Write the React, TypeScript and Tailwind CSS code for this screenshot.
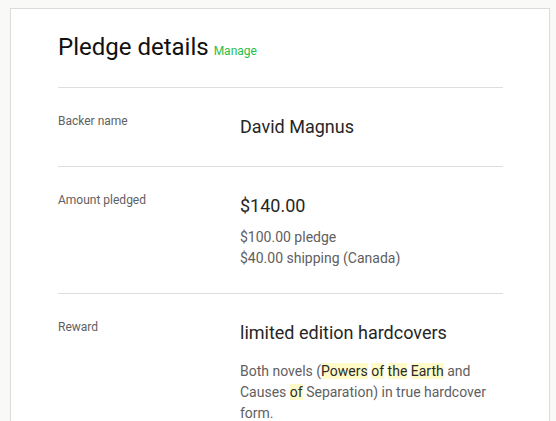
import React from "react";

function Hl({ children }: { children: React.ReactNode }) {
  return <span className="bg-[#fffbc8] text-[#2a2a2a]">{children}</span>;
}

function Row({ label, children }: { label: string; children: React.ReactNode }) {
  return (
    <div className="flex border-t border-[#dedede] pt-6 pb-6">
      <div className="w-[182px] shrink-0 text-[12px] leading-[18px] text-[#5f6061]">{label}</div>
      <div className="flex-1">{children}</div>
    </div>
  );
}

export default function App() {
  return (
    <div className="bg-[#f9f9f8] pl-[10px] pr-[6px] pt-2 [font-family:Roboto,'Liberation_Sans',sans-serif] overflow-hidden h-[421px]">
      <div className="bg-white border border-[#dcdcdc] pl-[47px] pr-[46px] pt-[22px] min-h-[600px]">
        <div className="flex items-baseline mb-6">
          <h1 className="text-[24px] leading-[32px] text-[#111]">Pledge details</h1>
          <span className="ml-[5px] text-[12px] text-[#2bbd4a]">Manage</span>
        </div>
        <Row label="Backer name">
          <div className="text-[18px] leading-[30px] text-[#262626]">David Magnus</div>
        </Row>
        <Row label="Amount pledged">
          <div className="text-[18px] leading-[30px] text-[#262626]">$140.00</div>
          <div className="mt-[6px] text-[14px] leading-[21px] text-[#5f6061]">
            <div>$100.00 pledge</div>
            <div>$40.00 shipping (Canada)</div>
          </div>
        </Row>
        <Row label="Reward">
          <div className="text-[18px] leading-[30px] text-[#262626]">limited edition hardcovers</div>
          <p className="mt-[13px] text-[14px] leading-[21px] text-[#5f6061] w-[262px]">
            Both novels (<Hl>Powers</Hl> <Hl>of</Hl> <Hl>the</Hl> <Hl>Earth</Hl> and Causes{" "}
            <Hl>of</Hl> Separation) in true hardcover form.
          </p>
        </Row>
      </div>
    </div>
  );
}
